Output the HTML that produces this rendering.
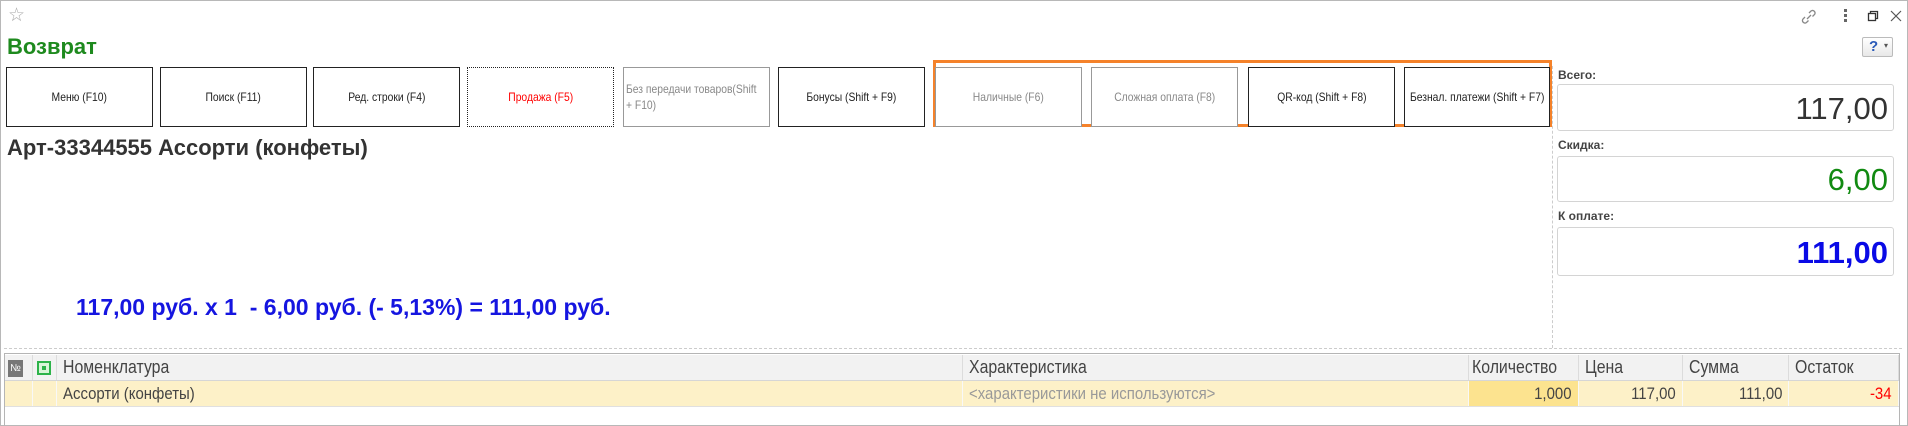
<!DOCTYPE html>
<html><head><meta charset="utf-8">
<style>
*{margin:0;padding:0;box-sizing:border-box}
body{width:1908px;height:426px;background:#fff;position:relative;overflow:hidden;font-family:"Liberation Sans",Arial,sans-serif;color:#333}
.a{position:absolute}
.frame{left:0;top:0;width:1908px;height:426px;border:1px solid #b8b8b8}
.btn{position:absolute;top:67px;height:60px;width:147px;border:1.5px solid #222;display:flex;align-items:center;justify-content:center;text-align:center;font-size:12px;color:#222;line-height:1.35;background:#fff;white-space:nowrap}
.btn span{display:inline-block;transform:scaleX(.86)}
.btn.g{color:#888;border-color:#999}
.lbl{font-size:12px;font-weight:bold;color:#444;left:1558px}
.box{left:1557px;width:337px;border:1px solid #d4d4d4;border-radius:3px;text-align:right;padding-right:5px;font-size:31px}
.th,.td{position:absolute;font-size:17px;white-space:nowrap;overflow:hidden}
.th span,.td span{display:inline-block;transform:scaleX(.88)}
.th{top:355px;height:25px;line-height:25px;background:#f2f2f2;border-right:1px solid #dcdcdc;padding-left:6px;color:#444;font-size:18px}
.th span{transform-origin:left}
.td{top:381px;height:25px;line-height:25px;background:#fdf1c8;border-right:1px solid #f8f8f8;padding:0 6px;color:#444}
.td span{transform-origin:left}
.td.r span{transform-origin:right}
</style></head><body>
<div class="a frame"></div>
<div class="a" style="left:8px;top:4px;font-size:19px;color:#aaa">☆</div>
<svg class="a" style="left:1800px;top:8px" width="18" height="18" viewBox="0 0 18 18"><path d="M7 11l4-4M5 9l-2 2a2.5 2.5 0 003.5 3.5l2-2M9 5l2-2a2.5 2.5 0 013.5 3.5l-2 2" stroke="#888" stroke-width="1.3" fill="none"/></svg>
<div class="a" style="left:1844px;top:9px;width:3px">
<div style="width:3px;height:3px;background:#666;margin-bottom:2px"></div><div style="width:3px;height:3px;background:#666;margin-bottom:2px"></div><div style="width:3px;height:3px;background:#666"></div></div>
<svg class="a" style="left:1867px;top:10px" width="12" height="12" viewBox="0 0 12 12"><rect x="1.5" y="3.5" width="7" height="7" fill="none" stroke="#333" stroke-width="1.3"/><path d="M3.5 3.5V1.5h7v7h-2" fill="none" stroke="#333" stroke-width="1.3"/></svg>
<svg class="a" style="left:1890px;top:10px" width="12" height="12" viewBox="0 0 12 12"><path d="M1 1l10 10M11 1L1 11" stroke="#555" stroke-width="1.2"/></svg>
<div class="a" style="left:1862px;top:37px;width:31px;height:20px;border:1px solid #bbb;background:linear-gradient(#fff,#e8e8e8);border-radius:2px"><span style="position:absolute;left:6px;top:0;font-size:15px;font-weight:bold;color:#2a5ab8">?</span><span style="position:absolute;left:21px;top:3px;font-size:8px;color:#555">▾</span></div>
<div class="a" style="left:7px;top:34px;font-size:22px;font-weight:bold;color:#1e8a1e">Возврат</div>

<div class="a" style="left:933px;top:60px;width:619px;height:67px;border:3px solid #f5822a"></div>
<div class="btn" style="left:6px"><span>Меню (F10)</span></div>
<div class="btn" style="left:160px"><span>Поиск (F11)</span></div>
<div class="btn" style="left:313px"><span>Ред. строки (F4)</span></div>
<div class="btn" style="left:467px;border:1.5px dotted #222;color:#f00"><span>Продажа (F5)</span></div>
<div class="btn g" style="left:623px;justify-content:flex-start;padding-left:2px;text-align:left"><span style="transform-origin:left">Без передачи товаров(Shift<br>+ F10)</span></div>
<div class="btn" style="left:778px"><span>Бонусы (Shift + F9)</span></div>
<div class="btn g" style="left:935px"><span>Наличные (F6)</span></div>
<div class="btn g" style="left:1091px"><span>Сложная оплата (F8)</span></div>
<div class="btn" style="left:1248px"><span>QR-код (Shift + F8)</span></div>
<div class="btn" style="left:1404px;width:146px"><span>Безнал. платежи (Shift + F7)</span></div>
<div class="a" style="left:1552px;top:66px;height:282px;border-left:1px dashed #ccc"></div>

<div class="a" style="left:7px;top:135px;font-size:22px;font-weight:bold;color:#333">Арт-33344555 Ассорти (конфеты)</div>

<div class="a lbl" style="top:68px">Всего:</div>
<div class="a box" style="top:84px;height:47px;line-height:47px;color:#333">117,00</div>
<div class="a lbl" style="top:138px">Скидка:</div>
<div class="a box" style="top:156px;height:46px;line-height:46px;color:#118a11">6,00</div>
<div class="a lbl" style="top:209px">К оплате:</div>
<div class="a box" style="top:227px;height:49px;line-height:49px;color:#0a0ae6;font-weight:bold">111,00</div>

<div class="a" style="left:76px;top:294px;font-size:23px;font-weight:bold;color:#1515e0;white-space:pre">117,00 руб. х 1  - 6,00 руб. (- 5,13%) = 111,00 руб.</div>

<div class="a" style="left:4px;top:348px;width:1898px;border-top:1px dashed #ccc"></div>
<div class="a" style="left:4px;top:353px;width:1896px;height:73px;border:1px solid #b5b5b5;border-bottom:none"></div>
<div class="a" style="left:5px;top:380px;width:1894px;border-top:1px solid #d6d6d6"></div>
<div class="a" style="left:5px;top:406px;width:1894px;border-top:1px solid #e0e0e0"></div>
<div class="th" style="left:5px;width:28px;padding-left:3px"><b style="display:inline-block;width:15px;height:17px;background:#777;color:#fff;font-size:10px;line-height:17px;text-align:center;vertical-align:middle;font-weight:normal">№</b></div>
<div class="th" style="left:33px;width:24px;padding-left:4px"><b style="display:inline-block;width:14px;height:14px;background:#2db34a;border:2px solid #2db34a;vertical-align:middle;box-shadow:inset 0 0 0 3px #d8f5d8"></b></div>
<div class="th" style="left:57px;width:906px"><span>Номенклатура</span></div>
<div class="th" style="left:963px;width:506px"><span>Характеристика</span></div>
<div class="th" style="left:1469px;width:110px;padding-left:3px"><span>Количество</span></div>
<div class="th" style="left:1579px;width:104px"><span>Цена</span></div>
<div class="th" style="left:1683px;width:106px"><span>Сумма</span></div>
<div class="th" style="left:1789px;width:110px"><span>Остаток</span></div>
<div class="td" style="left:5px;width:28px"></div>
<div class="td" style="left:33px;width:24px"></div>
<div class="td" style="left:57px;width:906px"><span>Ассорти (конфеты)</span></div>
<div class="td" style="left:963px;width:506px;color:#999"><span>&lt;характеристики не используются&gt;</span></div>
<div class="td r" style="left:1469px;width:110px;text-align:right;background:#fce38f"><span>1,000</span></div>
<div class="td r" style="left:1579px;width:104px;text-align:right"><span>117,00</span></div>
<div class="td r" style="left:1683px;width:106px;text-align:right"><span>111,00</span></div>
<div class="td r" style="left:1789px;width:110px;text-align:right;color:#f00"><span>-34</span></div>
</body></html>
